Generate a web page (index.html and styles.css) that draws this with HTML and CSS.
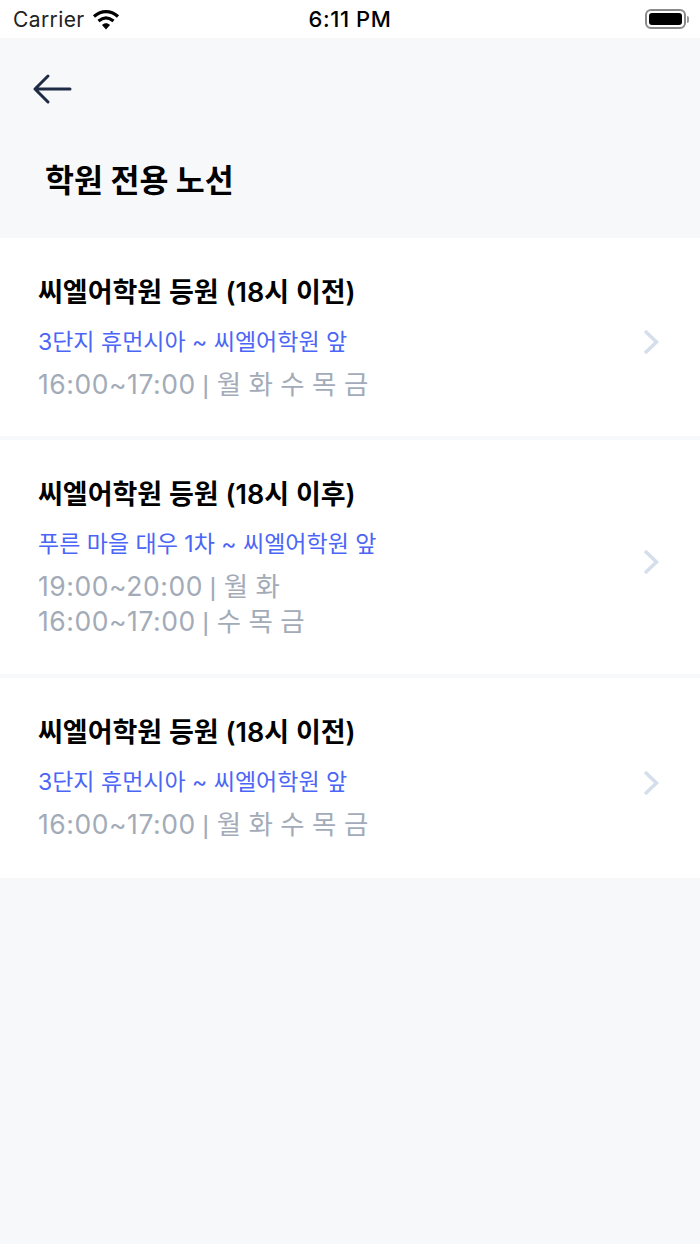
FILE: index.html
```html
<!DOCTYPE html>
<html lang="ko">
<head>
<meta charset="utf-8">
<title>학원 전용 노선</title>
<link rel="stylesheet" href="styles.css">
</head>
<body>
<div class="status">
  <div class="status-left">
    <span class="carrier">Carrier</span>
    <svg class="wifi" width="28" height="21" viewBox="0 0 28 21"><path d="M2 7.500C9.500 1 18.500 1 26 7.500" fill="none" stroke="#000" stroke-width="3.200"/><path d="M6.500 12C11.500 7.800 16.500 7.800 21.500 12" fill="none" stroke="#000" stroke-width="3.200"/><path d="M10 16C12.500 13.800 15.500 13.800 18 16L14 20.500Z" fill="#000"/></svg>
  </div>
  <div class="status-time">6:11 PM</div>
  <div class="status-right">
    <div class="battery"><div class="battery-fill"></div></div>
    <div class="battery-cap"></div>
  </div>
</div>
<header class="head">
  <svg class="back" width="40" height="32" viewBox="0 0 40 32"><path d="M38 16H3M16 3L3 16L16 29" fill="none" stroke="#1f2a44" stroke-width="3" stroke-linecap="round" stroke-linejoin="round"/></svg>
  <h1 class="title">학원 전용 노선</h1>
</header>
<main class="list">
  <a class="item">
    <div class="info">
      <div class="name">씨엘어학원 등원 (18시 이전)</div>
      <div class="route">3단지 휴먼시아 ~ 씨엘어학원 앞</div>
      <div class="time"><span class="clock">16:00~17:00</span> <span class="pipe">|</span> 월 화 수 목 금</div>
    </div>
    <svg class="chev" width="18" height="28" viewBox="0 0 18 28"><path d="M3 3L14.500 14L3 25" fill="none" stroke="#d5deeb" stroke-width="3.500"/></svg>
  </a>
  <a class="item">
    <div class="info">
      <div class="name">씨엘어학원 등원 (18시 이후)</div>
      <div class="route">푸른 마을 대우 1차 ~ 씨엘어학원 앞</div>
      <div class="time"><span class="clock">19:00~20:00</span> <span class="pipe">|</span> 월 화<br><span class="clock">16:00~17:00</span> <span class="pipe">|</span> 수 목 금</div>
    </div>
    <svg class="chev" width="18" height="28" viewBox="0 0 18 28"><path d="M3 3L14.500 14L3 25" fill="none" stroke="#d5deeb" stroke-width="3.500"/></svg>
  </a>
  <a class="item">
    <div class="info">
      <div class="name">씨엘어학원 등원 (18시 이전)</div>
      <div class="route">3단지 휴먼시아 ~ 씨엘어학원 앞</div>
      <div class="time"><span class="clock">16:00~17:00</span> <span class="pipe">|</span> 월 화 수 목 금</div>
    </div>
    <svg class="chev" width="18" height="28" viewBox="0 0 18 28"><path d="M3 3L14.500 14L3 25" fill="none" stroke="#d5deeb" stroke-width="3.500"/></svg>
  </a>
</main>
</body>
</html>
```
FILE: styles.css
```css
* { box-sizing: border-box; }
html, body { margin: 0; height: 100%; }
body {
  width: 700px;
  min-height: 1244px;
  background: #f7f8fa;
  font-family: Inter, "Noto Sans CJK KR", sans-serif;
  overflow: hidden;
}
.status {
  height: 38px;
  background: #fff;
  display: grid;
  grid-template-columns: 1fr auto 1fr;
  align-items: center;
  padding: 0 11px 0 13px;
  color: #000;
}
.status-left { display: flex; align-items: center; gap: 7px; font-size: 21px; color: #222; }
.carrier { letter-spacing: .4px; }
.status-time { font-size: 22px; font-weight: 500; letter-spacing: .6px; margin-left: -2px; }
.status-right { display: flex; justify-content: flex-end; align-items: center; gap: 1px; }
.battery {
  width: 41px;
  height: 20px;
  border: 2px solid #8a8a8a;
  border-radius: 6px;
  padding: 2px;
}
.battery-fill { width: 100%; height: 100%; background: #000; border-radius: 3px; }
.battery-cap { width: 2px; height: 7px; background: #999; border-radius: 0 2px 2px 0; }
.head { height: 200px; padding: 35px 0 0 32px; }
.back { display: block; }
.title {
  margin: 56px 0 0 13px;
  font-size: 31.500px;
  line-height: 40px;
  font-weight: 700;
  color: #000;
}
.list { display: flex; flex-direction: column; gap: 4px; }
.item {
  display: flex;
  align-items: center;
  justify-content: space-between;
  background: #fff;
  padding: 0 38px 0 38px;
}
.item { min-height: 198px; }
.item:nth-child(2) { min-height: 234px; }
.item:nth-child(3) { min-height: 200px; }
.info { margin-top: 6px; }
.item:nth-child(3) .info { margin-top: 4px; }
.name { font-size: 27px; font-weight: 600; line-height: 34px; color: #000; margin-top: -3px; }
.route { margin-top: 17px; font-size: 23px; line-height: 30px; color: #4b65f6; }
.time { margin-top: 10px; font-size: 26.500px; line-height: 34px; color: #a3abb8; }
.clock { letter-spacing: .55px; margin-right: -1px; }
.pipe { font-family: "Liberation Sans", sans-serif; }
.chev { flex: none; margin: 10px 2px 0 0; }
```
